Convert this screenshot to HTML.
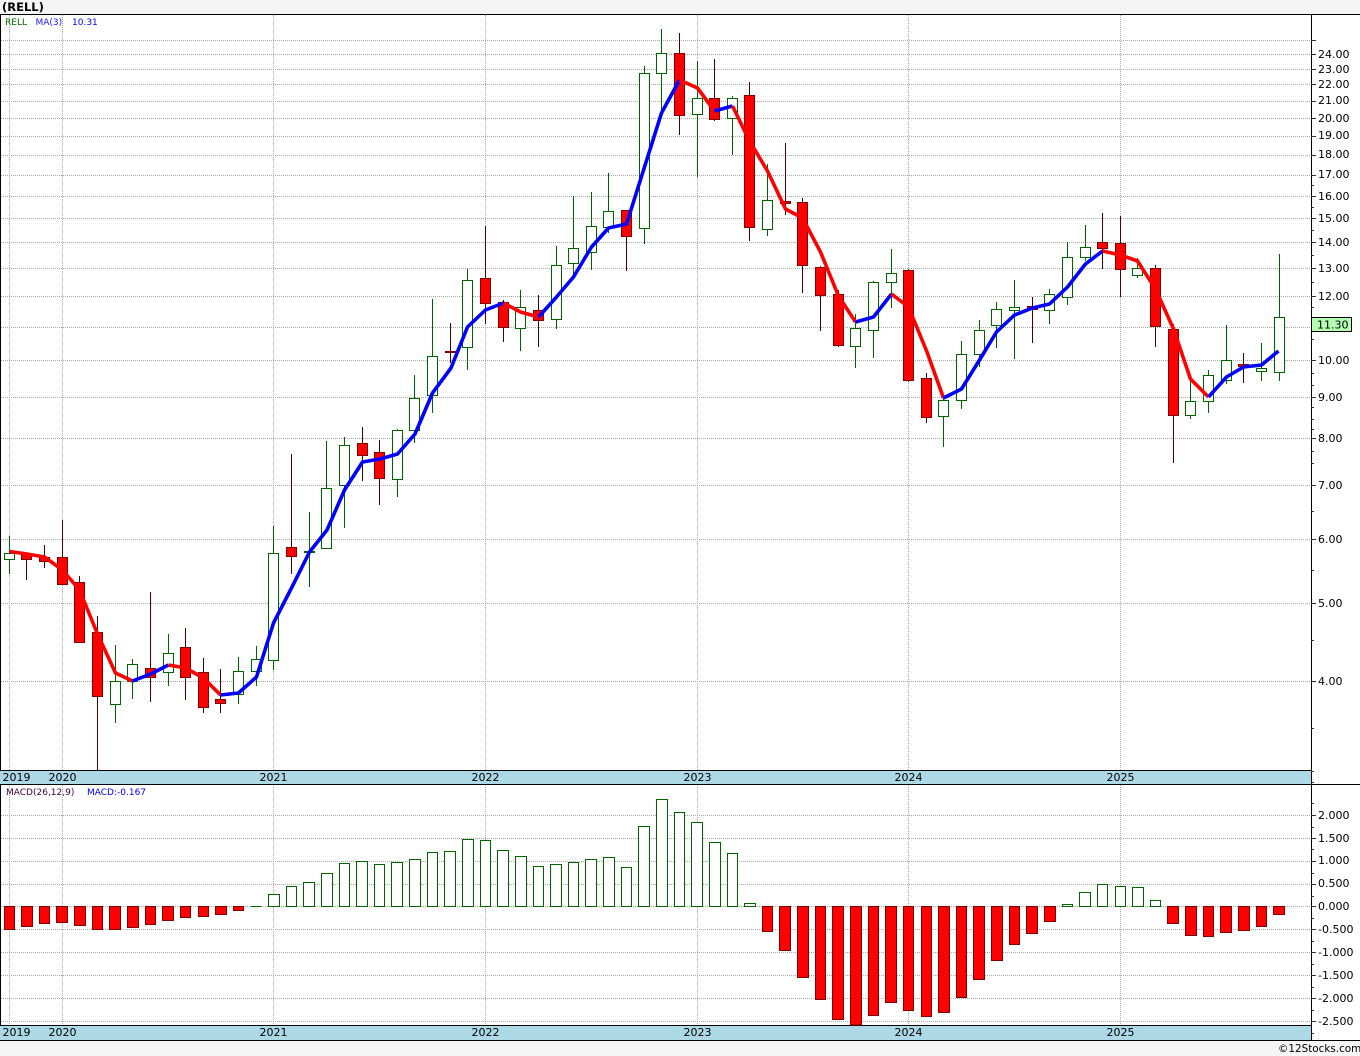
<!DOCTYPE html>
<html>
<head>
<meta charset="utf-8">
<title>RELL</title>
<style>
html,body{margin:0;padding:0;background:#f5f5f5;width:1360px;height:1056px;overflow:hidden}
svg{display:block}
text{font-family:"DejaVu Sans","Liberation Sans",sans-serif;font-size:11px;fill:#000}
.s{font-size:9px}
.c{shape-rendering:crispEdges}
</style>
</head>
<body>
<svg width="1360" height="1056" viewBox="0 0 1360 1056" xmlns="http://www.w3.org/2000/svg">
<rect x="0" y="0" width="1360" height="1056" fill="#f5f5f5"/>
<rect x="0" y="14" width="1360" height="1027" fill="#fff"/>
<text x="2" y="11" style="font-size:11.5px;font-weight:bold">(RELL)</text>

<!-- frame -->
<g class="c" fill="#000">
<rect x="0" y="14" width="1360" height="1"/>
<rect x="0" y="14" width="1" height="1027"/>
<rect x="0" y="771" width="1311" height="13" fill="#add8e6"/>
<rect x="0" y="1026" width="1311" height="14" fill="#add8e6"/>
<rect x="0" y="770" width="1311" height="1"/>
<rect x="0" y="784" width="1360" height="1"/>
<rect x="0" y="1025" width="1311" height="1"/>
<rect x="0" y="1040" width="1360" height="1"/>
</g>

<!-- grid -->
<g class="c" fill="none" stroke="#aaaaaa" stroke-width="1" stroke-dasharray="1 1">
<path d="M1 40.5H1316M1 54.5H1316M1 69.5H1316M1 84.5H1316M1 101.5H1316M1 118.5H1316M1 136.5H1316M1 155.5H1316M1 175.5H1316M1 196.5H1316M1 218.5H1316M1 242.5H1316M1 268.5H1316M1 296.5H1316M1 327.5H1316M1 360.5H1316M1 397.5H1316M1 438.5H1316M1 485.5H1316M1 539.5H1316M1 603.5H1316M1 681.5H1316"/>
<path d="M1 815.5H1316M1 838.5H1316M1 861.5H1316M1 884.5H1316M1 906.5H1316M1 929.5H1316M1 952.5H1316M1 975.5H1316M1 998.5H1316M1 1021.5H1316"/>
<path d="M9.5 15V770M62.5 15V770M273.5 15V770M485.5 15V770M697.5 15V770M908.5 15V770M1120.5 15V770"/>
<path d="M9.5 785V1025M62.5 785V1025M273.5 785V1025M485.5 785V1025M697.5 785V1025M908.5 785V1025M1120.5 785V1025"/>
</g>

<!-- axis -->
<g class="c" fill="none" stroke="#000" stroke-width="1">
<path d="M1311.5 14V1040"/>
<path stroke="#333" d="M1311 40.5H1316M1311 54.5H1316M1311 69.5H1316M1311 84.5H1316M1311 101.5H1316M1311 118.5H1316M1311 136.5H1316M1311 155.5H1316M1311 175.5H1316M1311 196.5H1316M1311 218.5H1316M1311 242.5H1316M1311 268.5H1316M1311 296.5H1316M1311 360.5H1316M1311 397.5H1316M1311 438.5H1316M1311 485.5H1316M1311 539.5H1316M1311 603.5H1316M1311 681.5H1316"/>
<path stroke="#333" d="M1311 185.5H1314M1311 207.5H1314M1311 230.5H1314M1311 255.5H1314M1311 282.5H1314M1311 307.5H1314M1311 339.5H1314M1311 373.5H1314M1311 385.5H1314M1311 407.5H1314M1311 419.5H1314M1311 429.5H1314M1311 451.5H1314M1311 463.5H1314M1311 511.5H1314M1311 570.5H1314M1311 640.5H1314M1311 728.5H1314M1311 771.5H1314M1311 782.5H1314"/>
<path stroke="#333" d="M1311 815.5H1316M1311 838.5H1316M1311 861.5H1316M1311 884.5H1316M1311 906.5H1316M1311 929.5H1316M1311 952.5H1316M1311 975.5H1316M1311 998.5H1316M1311 1021.5H1316"/>
<path stroke="#333" d="M1311 803.5H1314M1311 827.5H1314M1311 849.5H1314M1311 873.5H1314M1311 896.5H1314M1311 918.5H1314M1311 941.5H1314M1311 964.5H1314M1311 987.5H1314M1311 1010.5H1314M1311 1033.5H1314"/>
</g>

<!-- wicks -->
<path class="c" fill="none" stroke="#006400" d="M9.5 536V574M115.5 645V723M132.5 659V699M168.5 634V686M238.5 657V704M256.5 646V686M273.5 526V670M309.5 512V587M326.5 441V548M344.5 437V528M397.5 429V497M414.5 375V443M432.5 299V413M467.5 269V370M520.5 290V351M556.5 246V329M573.5 196V277M591.5 192V270M608.5 173V233M644.5 66V244M661.5 29V110M697.5 61V177M732.5 96V155M767.5 164V236M855.5 314V368M873.5 281V358M891.5 249V308M943.5 395V447M961.5 341V409M979.5 320V367M996.5 302V348M1014.5 280V359M1049.5 289V324M1067.5 242V305M1085.5 225V261M1137.5 258V278M1190.5 380V419M1208.5 370V413M1226.5 325V384M1261.5 343V381M1279.5 254V381"/>
<path class="c" fill="none" stroke="#4d0000" d="M26.5 553V580M44.5 545V568M62.5 520V584M79.5 576V642M97.5 616V770M150.5 592V702M185.5 628V700M203.5 658V713M220.5 669V713M291.5 454V574M362.5 427V481M379.5 440V505M450.5 323V363M485.5 226V324M503.5 300V342M538.5 295V347M626.5 210V271M679.5 33V135M714.5 59V121M749.5 82V241M785.5 143V215M802.5 198V293M820.5 266V331M838.5 290V347M908.5 269V382M926.5 373V423M1032.5 297V343M1102.5 213V269M1120.5 216V297M1155.5 265V347M1173.5 324V463M1243.5 353V383"/>

<!-- green bodies -->
<path class="c" fill="#fff" stroke="#006400" d="M4.5 553.5h10V559.5h-10zM110.5 681.5h10V704.5h-10zM127.5 664.5h10V681.5h-10zM163.5 653.5h10V672.5h-10zM233.5 671.5h10V694.5h-10zM251.5 659.5h10V671.5h-10zM268.5 553.5h10V660.5h-10zM304.5 551.5h10V552.5h-10zM321.5 488.5h10V548.5h-10zM339.5 445.5h10V485.5h-10zM392.5 430.5h10V479.5h-10zM409.5 398.5h10V430.5h-10zM427.5 356.5h10V395.5h-10zM462.5 280.5h10V347.5h-10zM515.5 307.5h10V328.5h-10zM551.5 265.5h10V319.5h-10zM568.5 248.5h10V263.5h-10zM586.5 226.5h10V252.5h-10zM603.5 211.5h10V227.5h-10zM639.5 73.5h10V228.5h-10zM656.5 53.5h10V73.5h-10zM692.5 98.5h10V114.5h-10zM727.5 98.5h10V118.5h-10zM762.5 200.5h10V229.5h-10zM850.5 328.5h10V346.5h-10zM868.5 282.5h10V330.5h-10zM886.5 273.5h10V282.5h-10zM938.5 400.5h10V416.5h-10zM956.5 354.5h10V400.5h-10zM974.5 330.5h10V354.5h-10zM991.5 309.5h10V325.5h-10zM1009.5 307.5h10V310.5h-10zM1044.5 294.5h10V310.5h-10zM1062.5 257.5h10V297.5h-10zM1080.5 247.5h10V257.5h-10zM1132.5 268.5h10V275.5h-10zM1185.5 401.5h10V415.5h-10zM1203.5 375.5h10V401.5h-10zM1221.5 360.5h10V380.5h-10zM1256.5 368.5h10V371.5h-10zM1274.5 317.5h10V372.5h-10z"/>
<!-- red bodies -->
<path class="c" fill="#f00" stroke="#800000" d="M21.5 553.5h10V559.5h-10zM39.5 557.5h10V561.5h-10zM57.5 557.5h10V584.5h-10zM74.5 582.5h10V642.5h-10zM92.5 632.5h10V696.5h-10zM145.5 668.5h10V677.5h-10zM180.5 647.5h10V677.5h-10zM198.5 672.5h10V707.5h-10zM215.5 699.5h10V703.5h-10zM286.5 547.5h10V556.5h-10zM357.5 443.5h10V455.5h-10zM374.5 452.5h10V478.5h-10zM445.5 351.5h10V352.5h-10zM480.5 278.5h10V303.5h-10zM498.5 302.5h10V327.5h-10zM533.5 310.5h10V320.5h-10zM621.5 210.5h10V236.5h-10zM674.5 53.5h10V115.5h-10zM709.5 98.5h10V119.5h-10zM744.5 95.5h10V227.5h-10zM780.5 201.5h10V203.5h-10zM797.5 202.5h10V265.5h-10zM815.5 267.5h10V295.5h-10zM833.5 294.5h10V345.5h-10zM903.5 270.5h10V380.5h-10zM921.5 378.5h10V417.5h-10zM1027.5 306.5h10V309.5h-10zM1097.5 242.5h10V248.5h-10zM1115.5 243.5h10V269.5h-10zM1150.5 268.5h10V326.5h-10zM1168.5 329.5h10V415.5h-10zM1238.5 364.5h10V366.5h-10z"/>

<!-- moving average -->
<g fill="none" stroke-width="3.6" stroke-linejoin="round" stroke-linecap="butt">
<polyline stroke="#f00" points="9.5,551.5 27,554 44.5,557 62.5,570 79.5,590 97.5,634 115.5,673 132.5,681"/>
<polyline stroke="#00f" points="132.5,681 150.5,674 168.5,665"/>
<polyline stroke="#f00" points="168.5,665 185.5,668 203.5,678 220.5,695"/>
<polyline stroke="#00f" points="220.5,695 238.5,693 256.5,677 273.5,623 292,587 309.5,552 327,530 344.5,490 362.5,462 380,459 397.5,454 415,434 432.5,393 451,368 467.5,327 485.5,310 503.5,303"/>
<polyline stroke="#f00" points="503.5,303 520.5,312 538.5,317"/>
<polyline stroke="#00f" points="538.5,317 556.5,297 573.5,277 591.5,247 608.5,228 626.5,224 644.5,167 661.5,113 679.5,80"/>
<polyline stroke="#f00" points="679.5,80 697.5,88 714.5,111"/>
<polyline stroke="#00f" points="714.5,111 732.5,106"/>
<polyline stroke="#f00" points="732.5,106 749.5,141 767.5,171 785.5,209 802.5,218 820.5,252 838.5,296 855.5,322"/>
<polyline stroke="#00f" points="855.5,322 873.5,317 891.5,294"/>
<polyline stroke="#f00" points="891.5,294 908.5,307 927,352 943.5,398"/>
<polyline stroke="#00f" points="943.5,398 961.5,389 979.5,360 996.5,332 1014.5,315 1032.5,308 1049.5,304 1067.5,287 1085.5,264 1102.5,251"/>
<polyline stroke="#f00" points="1102.5,251 1120.5,255 1137.5,261 1155.5,289 1173.5,329 1190.5,379 1208.5,397"/>
<polyline stroke="#00f" points="1208.5,397 1226.5,377 1243.5,367 1261.5,365 1278.5,351"/>
</g>

<!-- MACD bars -->
<path class="c" fill="#fff" stroke="#006400" d="M250.5 906.5H261.5M268.5 894.5H279.5V906.5H268.5zM286.5 886.5H296.5V906.5H286.5zM303.5 882.5H314.5V906.5H303.5zM321.5 873.5H332.5V906.5H321.5zM339.5 863.5H349.5V906.5H339.5zM356.5 861.5H367.5V906.5H356.5zM374.5 864.5H384.5V906.5H374.5zM391.5 862.5H402.5V906.5H391.5zM409.5 859.5H420.5V906.5H409.5zM427.5 852.5H437.5V906.5H427.5zM444.5 851.5H455.5V906.5H444.5zM462.5 839.5H473.5V906.5H462.5zM480.5 840.5H490.5V906.5H480.5zM497.5 850.5H508.5V906.5H497.5zM515.5 856.5H526.5V906.5H515.5zM533.5 866.5H543.5V906.5H533.5zM550.5 864.5H561.5V906.5H550.5zM568.5 862.5H578.5V906.5H568.5zM585.5 859.5H596.5V906.5H585.5zM603.5 857.5H614.5V906.5H603.5zM621.5 867.5H631.5V906.5H621.5zM638.5 826.5H649.5V906.5H638.5zM656.5 799.5H667.5V906.5H656.5zM674.5 812.5H684.5V906.5H674.5zM691.5 822.5H702.5V906.5H691.5zM709.5 842.5H720.5V906.5H709.5zM727.5 853.5H737.5V906.5H727.5zM744.5 903.5H755.5V906.5H744.5zM1062.5 904.5H1072.5V906.5H1062.5zM1079.5 892.5H1090.5V906.5H1079.5zM1097.5 884.5H1107.5V906.5H1097.5zM1115.5 886.5H1125.5V906.5H1115.5zM1132.5 887.5H1143.5V906.5H1132.5zM1150.5 900.5H1160.5V906.5H1150.5z"/>
<path class="c" fill="#f00" stroke="#800000" d="M4.5 906.5H14.5V929.5H4.5zM21.5 906.5H32.5V926.5H21.5zM39.5 906.5H49.5V923.5H39.5zM56.5 906.5H67.5V922.5H56.5zM74.5 906.5H85.5V925.5H74.5zM92.5 906.5H102.5V929.5H92.5zM109.5 906.5H120.5V929.5H109.5zM127.5 906.5H138.5V927.5H127.5zM145.5 906.5H155.5V924.5H145.5zM162.5 906.5H173.5V920.5H162.5zM180.5 906.5H190.5V917.5H180.5zM198.5 906.5H208.5V916.5H198.5zM215.5 906.5H226.5V914.5H215.5zM233.5 906.5H243.5V910.5H233.5zM762.5 906.5H772.5V931.5H762.5zM779.5 906.5H790.5V950.5H779.5zM797.5 906.5H808.5V977.5H797.5zM815.5 906.5H825.5V999.5H815.5zM832.5 906.5H843.5V1019.5H832.5zM850.5 906.5H861.5V1025H850.5zM868.5 906.5H878.5V1015.5H868.5zM885.5 906.5H896.5V1002.5H885.5zM903.5 906.5H913.5V1010.5H903.5zM921.5 906.5H931.5V1016.5H921.5zM938.5 906.5H949.5V1012.5H938.5zM956.5 906.5H966.5V997.5H956.5zM973.5 906.5H984.5V979.5H973.5zM991.5 906.5H1002.5V960.5H991.5zM1009.5 906.5H1019.5V944.5H1009.5zM1026.5 906.5H1037.5V933.5H1026.5zM1044.5 906.5H1055.5V921.5H1044.5zM1167.5 906.5H1178.5V923.5H1167.5zM1185.5 906.5H1196.5V935.5H1185.5zM1203.5 906.5H1213.5V936.5H1203.5zM1220.5 906.5H1231.5V932.5H1220.5zM1238.5 906.5H1249.5V930.5H1238.5zM1256.5 906.5H1266.5V926.5H1256.5zM1273.5 906.5H1284.5V914.5H1273.5z"/>

<!-- legends -->
<text class="s" x="5" y="25" style="fill:#006400">RELL</text>
<text class="s" x="35.5" y="25" style="fill:#2020ff">MA(3)</text>
<text class="s" x="72" y="25" style="fill:#0000ff">10.31</text>
<text class="s" x="6" y="795" style="fill:#400040">MACD(26,12,9)</text>
<text class="s" x="87" y="795" style="fill:#0000ff">MACD:-0.167</text>

<!-- date strips -->
<text x="2.5" y="781">2019</text><text x="48.5" y="781">2020</text><text x="259.5" y="781">2021</text><text x="471.5" y="781">2022</text><text x="683.5" y="781">2023</text><text x="894.5" y="781">2024</text><text x="1106.5" y="781">2025</text>
<text x="2.5" y="1036">2019</text><text x="48.5" y="1036">2020</text><text x="259.5" y="1036">2021</text><text x="471.5" y="1036">2022</text><text x="683.5" y="1036">2023</text><text x="894.5" y="1036">2024</text><text x="1106.5" y="1036">2025</text>

<!-- price labels -->
<text x="1318" y="58">24.00</text><text x="1318" y="73">23.00</text><text x="1318" y="88">22.00</text><text x="1318" y="104">21.00</text><text x="1318" y="122">20.00</text><text x="1318" y="139">19.00</text><text x="1318" y="158">18.00</text><text x="1318" y="178">17.00</text><text x="1318" y="200">16.00</text><text x="1318" y="222">15.00</text><text x="1318" y="246">14.00</text><text x="1318" y="272">13.00</text><text x="1318" y="300">12.00</text><text x="1318" y="364">10.00</text><text x="1318" y="401">9.00</text><text x="1318" y="442">8.00</text><text x="1318" y="489">7.00</text><text x="1318" y="543">6.00</text><text x="1318" y="607">5.00</text><text x="1318" y="685">4.00</text>
<rect class="c" x="1311.5" y="317.5" width="40" height="14" fill="#b4ffb4" stroke="#000"/>
<text x="1317" y="328.5">11.30</text>

<!-- MACD labels -->
<text x="1318" y="819">2.000</text><text x="1318" y="842">1.500</text><text x="1318" y="864">1.000</text><text x="1318" y="887">0.500</text><text x="1318" y="910">0.000</text><text x="1318" y="933">-0.500</text><text x="1318" y="956">-1.000</text><text x="1318" y="979">-1.500</text><text x="1318" y="1002">-2.000</text><text x="1318" y="1025">-2.500</text>

<text x="1278" y="1052" style="font-size:10.4px">©12Stocks.com</text>
</svg>
</body>
</html>
